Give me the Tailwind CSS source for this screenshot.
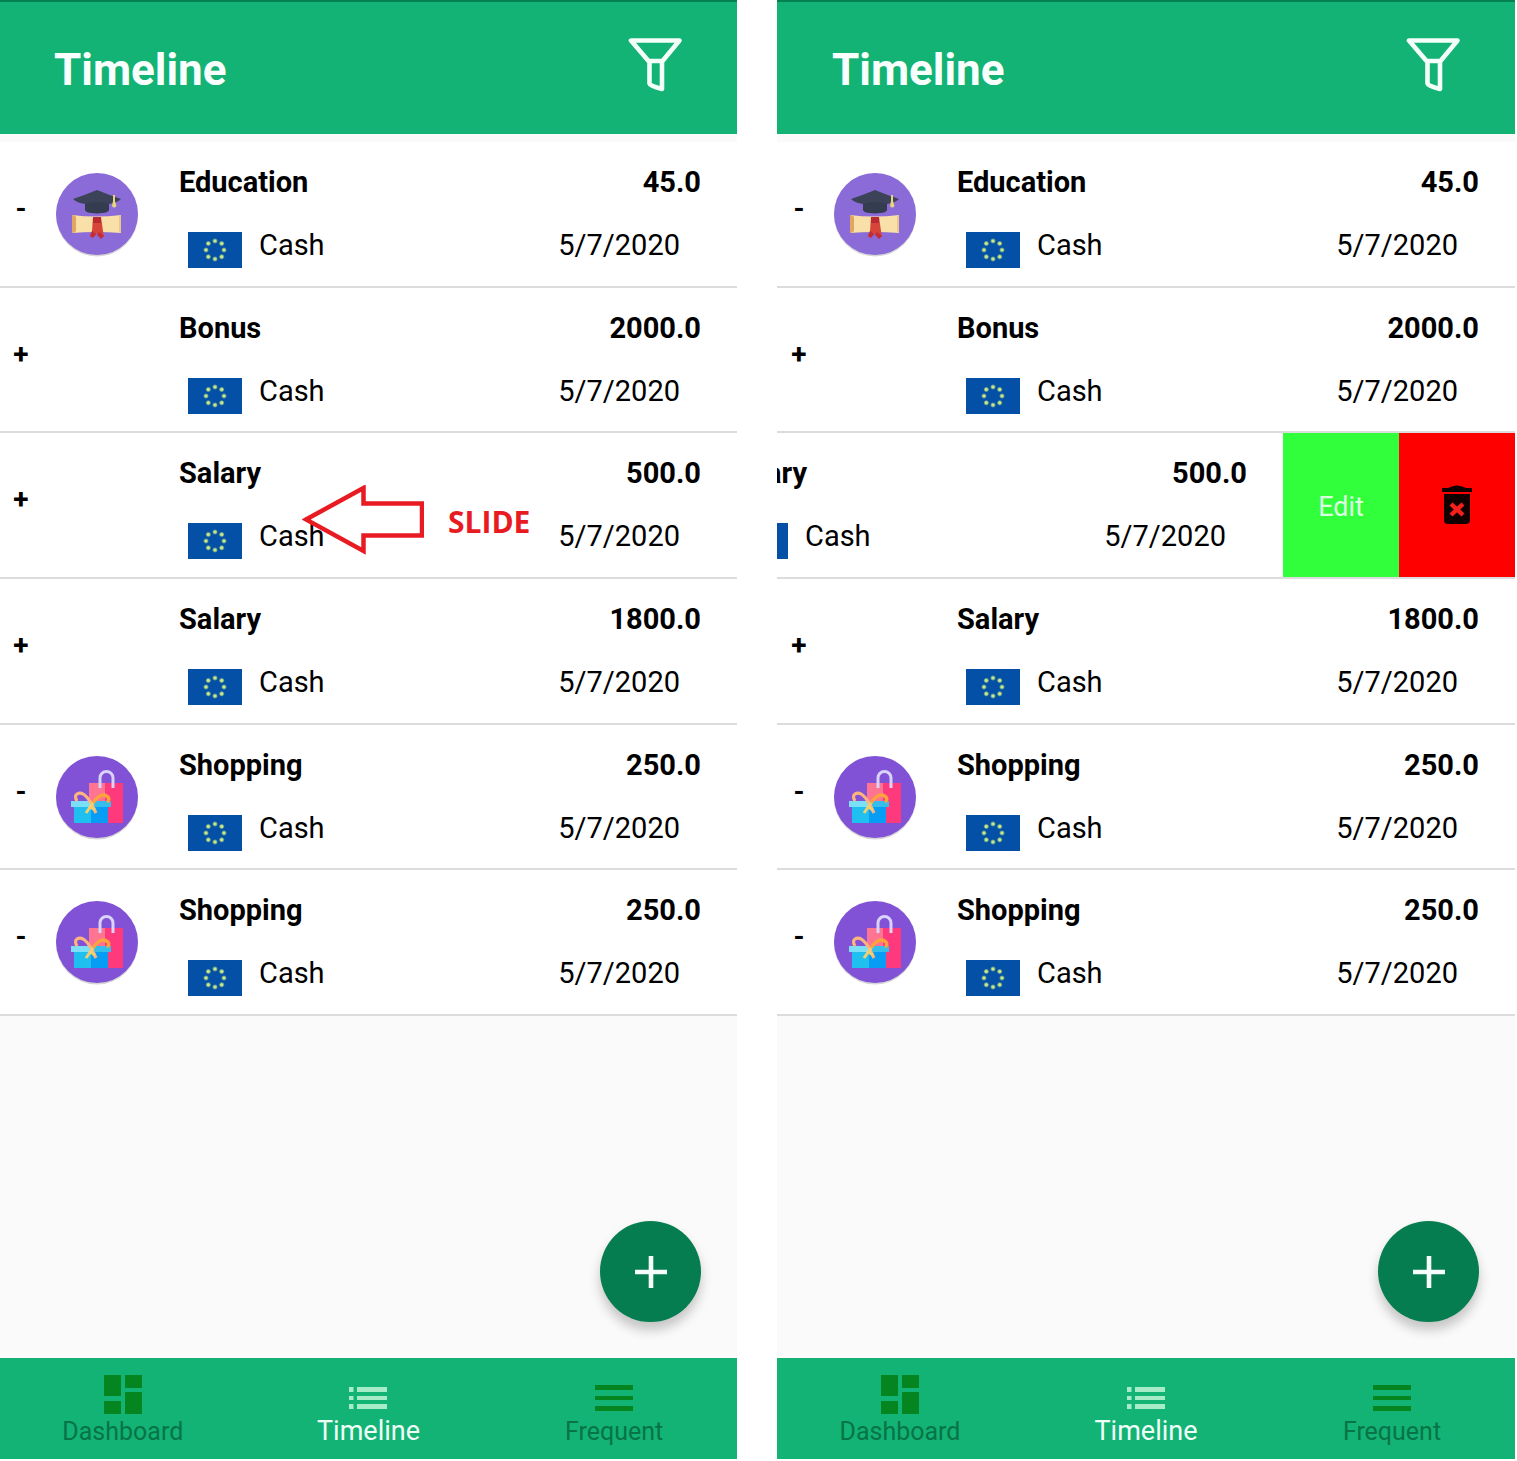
<!DOCTYPE html>
<html lang="en">
<head>
<meta charset="utf-8">
<meta name="viewport" content="width=device-width, initial-scale=1">
<title>Timeline</title>
<script src="https://cdn.jsdelivr.net/npm/@tailwindcss/browser@4"></script>
</head>
<body class="bg-white font-[Roboto,sans-serif] text-black">

<!-- Shared icons -->
<svg class="hidden" aria-hidden="true">
  <symbol id="filter" viewBox="0 0 56 56">
    <path d="M3 3.500H51.500L34.500 24H20.500Z M21.500 24V46.500Q22 49 34 52V24" fill="none" stroke="#f4fffa" stroke-width="4.600" stroke-linejoin="round" stroke-linecap="round"/>
  </symbol>
  <symbol id="eu" viewBox="0 0 54 36">
    <path fill="#0350a6" d="M0 0h54v36H0z"/>
    <g fill="#c9e68a" stroke="#5f9c8c" stroke-width=".8">
      <circle cx="27" cy="9" r="2.100"/><circle cx="33.700" cy="11.500" r="2.100"/><circle cx="36" cy="18" r="2.100"/><circle cx="33.700" cy="24.800" r="2.100"/>
      <circle cx="27" cy="27" r="2.100"/><circle cx="20.300" cy="24.800" r="2.100"/><circle cx="18" cy="18" r="2.100"/><circle cx="20.300" cy="11.500" r="2.100"/>
    </g>
  </symbol>
  <symbol id="education" viewBox="0 0 84 86">
    <circle cx="42" cy="43.500" r="41" fill="#000" opacity=".16"/>
    <circle cx="42" cy="42" r="41" fill="#8a6bd8"/>
    <path d="M30 27h24v11q0 3-12 3.500Q30 41 30 38z" fill="#343c50"/>
    <path d="M42 18q12 5 24 9-4 4-12 5-12-4-24 0-8-1-12-5 12-4 24-9z" fill="#3c4358"/>
    <path d="M58 23h2v6l1.500 5q-2.500 3-4.500 0l1-5z" fill="#e8d77a"/>
    <path d="M17 43q24 3 49 0v18q-25-2-49 0z" fill="#f9e0a9"/>
    <path d="M17 43q3 0 4 2v14q-1 2-4 2z" fill="#e0a661"/>
    <path d="M66 43l-2 1v16l2 1z" fill="#eac88a"/>
    <path d="M38 45h8l2 14 1 6-5-1-2-3-2 3-5 1 2-6z" fill="#d6443a"/>
    <path d="M38 45h8v6h-8z" fill="#b92b32"/>
    <path d="M37 59l4 3-3 4-3-2zM44 60l5 4-3 3-4-4z" fill="#c12c36"/>
  </symbol>
  <symbol id="shopping" viewBox="0 0 84 86">
    <circle cx="42" cy="43.500" r="41" fill="#000" opacity=".16"/>
    <circle cx="42" cy="42" r="41" fill="#8152d6"/>
    <path d="M34 28h18v40H34z" fill="#ff7591"/>
    <path d="M50 28h18v40H50z" fill="#ff3a7c"/>
    <path d="M45 33V23a6.500 6.500 0 0 1 13 0v10" fill="none" stroke="#d9d3fa" stroke-width="3"/>
    <path d="M19 50h17v18H19z" fill="#1fc0f0"/>
    <path d="M36 50h17v18H36z" fill="#079df5"/>
    <path d="M16 46h20v6H16z" fill="#7be0f7"/><path d="M36 46h20v6H36z" fill="#35bdec"/>
    <path d="M38 48q8-12 15-6 2 3-1 5" fill="none" stroke="#fba43c" stroke-width="3.400"/>
    <path d="M22 46q-3-5 0-7 6-4 14 9l5 10" fill="none" stroke="#fdb57c" stroke-width="3.200"/>
    <path d="M31 58l7-10M34 51l6 4" fill="none" stroke="#f2cf70" stroke-width="3"/>
  </symbol>
  <symbol id="dashboard" viewBox="0 0 40 40">
    <path fill="#04851f" d="M1 1h17v21H1zM22 1h17v13H22zM1 27h17v13H1zM22 18h17v22H22z"/>
  </symbol>
  <symbol id="list" viewBox="0 0 40 40">
    <path fill="#a6ecc8" d="M1 12h4.500v5H1zM9 12h30v5H9zM1 21h4.500v4H1zM9 21h30v4H9zM1 29h4.500v5H1zM9 29h30v5H9z"/>
  </symbol>
  <symbol id="menu" viewBox="0 0 40 40">
    <path fill="#04851f" d="M1 10h38v5H1zM1 21h38v4H1zM1 31h38v5H1z"/>
  </symbol>
  <symbol id="plus" viewBox="0 0 32 32">
    <path fill="#f6fffb" d="M13.700 0h4.600v13.700H32v4.600H18.300V32h-4.600V18.300H0v-4.600h13.700z"/>
  </symbol>
  <symbol id="trash" viewBox="0 0 30 40">
    <path d="M0 3h6Q15-2 24 3h6v4H0z" fill="#120000"/>
    <path d="M2 9h26v26q0 4-4 4H6q-4 0-4-4z" fill="#120000"/>
    <path d="M9 19l12 11M21 19l-12 11" stroke="#f5201c" stroke-width="4.400"/>
  </symbol>
</svg>

<div class="grid min-h-screen grid-cols-[737fr_738fr] gap-10 pr-0.5 pb-0.5">

  <!-- Phone: list at rest -->
  <section class="flex min-w-0 flex-col bg-[#fafafa]">
    <header class="flex h-[134px] items-center justify-between border-t-2 border-[#058050] bg-[#12b374] pr-[53px] pl-[54px]">
      <h1 class="pt-1 text-[44px] leading-[52px] font-bold text-[#f8fffc]">Timeline</h1>
      <button aria-label="Filter" class="mb-1.5"><svg class="size-[56px]"><use href="#filter"/></svg></button>
    </header>
    <main class="flex flex-1 flex-col pt-2">
      <ul class="grid h-[874px] grid-rows-6">
        <li class="flex border-b-2 border-[#dcdcdc] bg-white">
          <span class="w-[42px] shrink-0 pt-[51px] text-center text-[28px] leading-8 font-bold">-</span>
          <svg class="mt-[30px] ml-[13px] h-[86px] w-[84px] shrink-0"><use href="#education"/></svg>
          <div class="ml-10 flex-1 pt-6">
            <div class="flex justify-between pr-9 text-[29px] leading-8 font-bold"><span>Education</span><span>45.0</span></div>
            <div class="mt-[31px] flex pr-[57px] pl-[9px] text-[29px] leading-8"><svg class="mt-[3px] h-9 w-[54px]"><use href="#eu"/></svg><span class="ml-[17px] flex-1">Cash</span><time>5/7/2020</time></div>
          </div>
        </li>
        <li class="flex border-b-2 border-[#dcdcdc] bg-white">
          <span class="w-[42px] shrink-0 pt-[51px] text-center text-[28px] leading-8 font-bold">+</span>
          <div class="ml-[137px] flex-1 pt-6">
            <div class="flex justify-between pr-9 text-[29px] leading-8 font-bold"><span>Bonus</span><span>2000.0</span></div>
            <div class="mt-[31px] flex pr-[57px] pl-[9px] text-[29px] leading-8"><svg class="mt-[3px] h-9 w-[54px]"><use href="#eu"/></svg><span class="ml-[17px] flex-1">Cash</span><time>5/7/2020</time></div>
          </div>
        </li>
        <li class="relative flex border-b-2 border-[#dcdcdc] bg-white">
          <span class="w-[42px] shrink-0 pt-[51px] text-center text-[28px] leading-8 font-bold">+</span>
          <div class="ml-[137px] flex-1 pt-6">
            <div class="flex justify-between pr-9 text-[29px] leading-8 font-bold"><span>Salary</span><span>500.0</span></div>
            <div class="mt-[31px] flex pr-[57px] pl-[9px] text-[29px] leading-8"><svg class="mt-[3px] h-9 w-[54px]"><use href="#eu"/></svg><span class="ml-[17px] flex-1">Cash</span><time>5/7/2020</time></div>
          </div>
          <!-- Gesture hint over the row -->
          <div class="absolute top-[52px] left-[302px] flex items-center gap-6">
            <svg class="h-[70px] w-[122px]" viewBox="0 0 122 70"><path d="M4 34.500L61.500 3V18.500H120V50.500H61.500V66Z" fill="#fff" stroke="#e81b23" stroke-width="4.500"/></svg>
            <span class="pt-1 font-['Open_Sans',sans-serif] text-[30px] leading-9 font-bold text-[#e81b23]">SLIDE</span>
          </div>
        </li>
        <li class="flex border-b-2 border-[#dcdcdc] bg-white">
          <span class="w-[42px] shrink-0 pt-[51px] text-center text-[28px] leading-8 font-bold">+</span>
          <div class="ml-[137px] flex-1 pt-6">
            <div class="flex justify-between pr-9 text-[29px] leading-8 font-bold"><span>Salary</span><span>1800.0</span></div>
            <div class="mt-[31px] flex pr-[57px] pl-[9px] text-[29px] leading-8"><svg class="mt-[3px] h-9 w-[54px]"><use href="#eu"/></svg><span class="ml-[17px] flex-1">Cash</span><time>5/7/2020</time></div>
          </div>
        </li>
        <li class="flex border-b-2 border-[#dcdcdc] bg-white">
          <span class="w-[42px] shrink-0 pt-[51px] text-center text-[28px] leading-8 font-bold">-</span>
          <svg class="mt-[30px] ml-[13px] h-[86px] w-[84px] shrink-0"><use href="#shopping"/></svg>
          <div class="ml-10 flex-1 pt-6">
            <div class="flex justify-between pr-9 text-[29px] leading-8 font-bold"><span>Shopping</span><span>250.0</span></div>
            <div class="mt-[31px] flex pr-[57px] pl-[9px] text-[29px] leading-8"><svg class="mt-[3px] h-9 w-[54px]"><use href="#eu"/></svg><span class="ml-[17px] flex-1">Cash</span><time>5/7/2020</time></div>
          </div>
        </li>
        <li class="flex border-b-2 border-[#dcdcdc] bg-white">
          <span class="w-[42px] shrink-0 pt-[51px] text-center text-[28px] leading-8 font-bold">-</span>
          <svg class="mt-[30px] ml-[13px] h-[86px] w-[84px] shrink-0"><use href="#shopping"/></svg>
          <div class="ml-10 flex-1 pt-6">
            <div class="flex justify-between pr-9 text-[29px] leading-8 font-bold"><span>Shopping</span><span>250.0</span></div>
            <div class="mt-[31px] flex pr-[57px] pl-[9px] text-[29px] leading-8"><svg class="mt-[3px] h-9 w-[54px]"><use href="#eu"/></svg><span class="ml-[17px] flex-1">Cash</span><time>5/7/2020</time></div>
          </div>
        </li>
      </ul>
      <button aria-label="Add" class="mt-auto mr-9 mb-9 flex size-[101px] items-center justify-center self-end rounded-full bg-[#057d50] shadow-[0_8px_12px_rgba(0,0,0,0.22)]"><svg class="size-8"><use href="#plus"/></svg></button>
    </main>
    <nav class="grid h-[101px] grid-cols-3 bg-[#12b374] text-[25px] leading-8">
      <a href="#" class="flex flex-col items-center pt-4 text-[#077346]"><svg class="size-10"><use href="#dashboard"/></svg><span class="mt-0.5">Dashboard</span></a>
      <a href="#" class="flex flex-col items-center pt-[17px] text-[27px] text-[#effff8]"><svg class="size-10"><use href="#list"/></svg><span>Timeline</span></a>
      <a href="#" class="flex flex-col items-center pt-[17px] text-[#077346]"><svg class="size-10"><use href="#menu"/></svg><span class="mt-px">Frequent</span></a>
    </nav>
  </section>

  <!-- Phone: third row slid open -->
  <section class="flex min-w-0 flex-col bg-[#fafafa]">
    <header class="flex h-[134px] items-center justify-between border-t-2 border-[#058050] bg-[#12b374] pr-[53px] pl-[55px]">
      <h1 class="pt-1 text-[44px] leading-[52px] font-bold text-[#f8fffc]">Timeline</h1>
      <button aria-label="Filter" class="mb-1.5"><svg class="size-[56px]"><use href="#filter"/></svg></button>
    </header>
    <main class="flex flex-1 flex-col pt-2">
      <ul class="grid h-[874px] grid-rows-6">
        <li class="flex border-b-2 border-[#dcdcdc] bg-white pl-px">
          <span class="w-[42px] shrink-0 pt-[51px] text-center text-[28px] leading-8 font-bold">-</span>
          <svg class="mt-[30px] ml-[13px] h-[86px] w-[84px] shrink-0"><use href="#education"/></svg>
          <div class="ml-10 flex-1 pt-6">
            <div class="flex justify-between pr-9 text-[29px] leading-8 font-bold"><span>Education</span><span>45.0</span></div>
            <div class="mt-[31px] flex pr-[57px] pl-[9px] text-[29px] leading-8"><svg class="mt-[3px] h-9 w-[54px]"><use href="#eu"/></svg><span class="ml-[17px] flex-1">Cash</span><time>5/7/2020</time></div>
          </div>
        </li>
        <li class="flex border-b-2 border-[#dcdcdc] bg-white pl-px">
          <span class="w-[42px] shrink-0 pt-[51px] text-center text-[28px] leading-8 font-bold">+</span>
          <div class="ml-[137px] flex-1 pt-6">
            <div class="flex justify-between pr-9 text-[29px] leading-8 font-bold"><span>Bonus</span><span>2000.0</span></div>
            <div class="mt-[31px] flex pr-[57px] pl-[9px] text-[29px] leading-8"><svg class="mt-[3px] h-9 w-[54px]"><use href="#eu"/></svg><span class="ml-[17px] flex-1">Cash</span><time>5/7/2020</time></div>
          </div>
        </li>
        <li class="flex justify-end overflow-hidden border-b-2 border-[#dcdcdc] bg-white">
          <div class="flex w-full shrink-0 pl-px">
            <div class="ml-[179px] flex-1 pt-6">
              <div class="flex justify-between pr-9 text-[29px] leading-8 font-bold"><span>Salary</span><span>500.0</span></div>
              <div class="mt-[31px] flex pr-[57px] pl-[9px] text-[29px] leading-8"><svg class="mt-[3px] h-9 w-[54px]"><use href="#eu"/></svg><span class="ml-[17px] flex-1">Cash</span><time>5/7/2020</time></div>
            </div>
          </div>
          <button class="w-[116px] shrink-0 bg-[#32ff3c] pt-1 text-[27px] text-[#dcffe0]">Edit</button>
          <button aria-label="Delete" class="flex w-[116px] shrink-0 items-center justify-center bg-[#fe0000]"><svg class="h-10 w-[30px]"><use href="#trash"/></svg></button>
        </li>
        <li class="flex border-b-2 border-[#dcdcdc] bg-white pl-px">
          <span class="w-[42px] shrink-0 pt-[51px] text-center text-[28px] leading-8 font-bold">+</span>
          <div class="ml-[137px] flex-1 pt-6">
            <div class="flex justify-between pr-9 text-[29px] leading-8 font-bold"><span>Salary</span><span>1800.0</span></div>
            <div class="mt-[31px] flex pr-[57px] pl-[9px] text-[29px] leading-8"><svg class="mt-[3px] h-9 w-[54px]"><use href="#eu"/></svg><span class="ml-[17px] flex-1">Cash</span><time>5/7/2020</time></div>
          </div>
        </li>
        <li class="flex border-b-2 border-[#dcdcdc] bg-white pl-px">
          <span class="w-[42px] shrink-0 pt-[51px] text-center text-[28px] leading-8 font-bold">-</span>
          <svg class="mt-[30px] ml-[13px] h-[86px] w-[84px] shrink-0"><use href="#shopping"/></svg>
          <div class="ml-10 flex-1 pt-6">
            <div class="flex justify-between pr-9 text-[29px] leading-8 font-bold"><span>Shopping</span><span>250.0</span></div>
            <div class="mt-[31px] flex pr-[57px] pl-[9px] text-[29px] leading-8"><svg class="mt-[3px] h-9 w-[54px]"><use href="#eu"/></svg><span class="ml-[17px] flex-1">Cash</span><time>5/7/2020</time></div>
          </div>
        </li>
        <li class="flex border-b-2 border-[#dcdcdc] bg-white pl-px">
          <span class="w-[42px] shrink-0 pt-[51px] text-center text-[28px] leading-8 font-bold">-</span>
          <svg class="mt-[30px] ml-[13px] h-[86px] w-[84px] shrink-0"><use href="#shopping"/></svg>
          <div class="ml-10 flex-1 pt-6">
            <div class="flex justify-between pr-9 text-[29px] leading-8 font-bold"><span>Shopping</span><span>250.0</span></div>
            <div class="mt-[31px] flex pr-[57px] pl-[9px] text-[29px] leading-8"><svg class="mt-[3px] h-9 w-[54px]"><use href="#eu"/></svg><span class="ml-[17px] flex-1">Cash</span><time>5/7/2020</time></div>
          </div>
        </li>
      </ul>
      <button aria-label="Add" class="mt-auto mr-9 mb-9 flex size-[101px] items-center justify-center self-end rounded-full bg-[#057d50] shadow-[0_8px_12px_rgba(0,0,0,0.22)]"><svg class="size-8"><use href="#plus"/></svg></button>
    </main>
    <nav class="grid h-[101px] grid-cols-3 bg-[#12b374] text-[25px] leading-8">
      <a href="#" class="flex flex-col items-center pt-4 text-[#077346]"><svg class="size-10"><use href="#dashboard"/></svg><span class="mt-0.5">Dashboard</span></a>
      <a href="#" class="flex flex-col items-center pt-[17px] text-[27px] text-[#effff8]"><svg class="size-10"><use href="#list"/></svg><span>Timeline</span></a>
      <a href="#" class="flex flex-col items-center pt-[17px] text-[#077346]"><svg class="size-10"><use href="#menu"/></svg><span class="mt-px">Frequent</span></a>
    </nav>
  </section>
</div>
</body>
</html>
